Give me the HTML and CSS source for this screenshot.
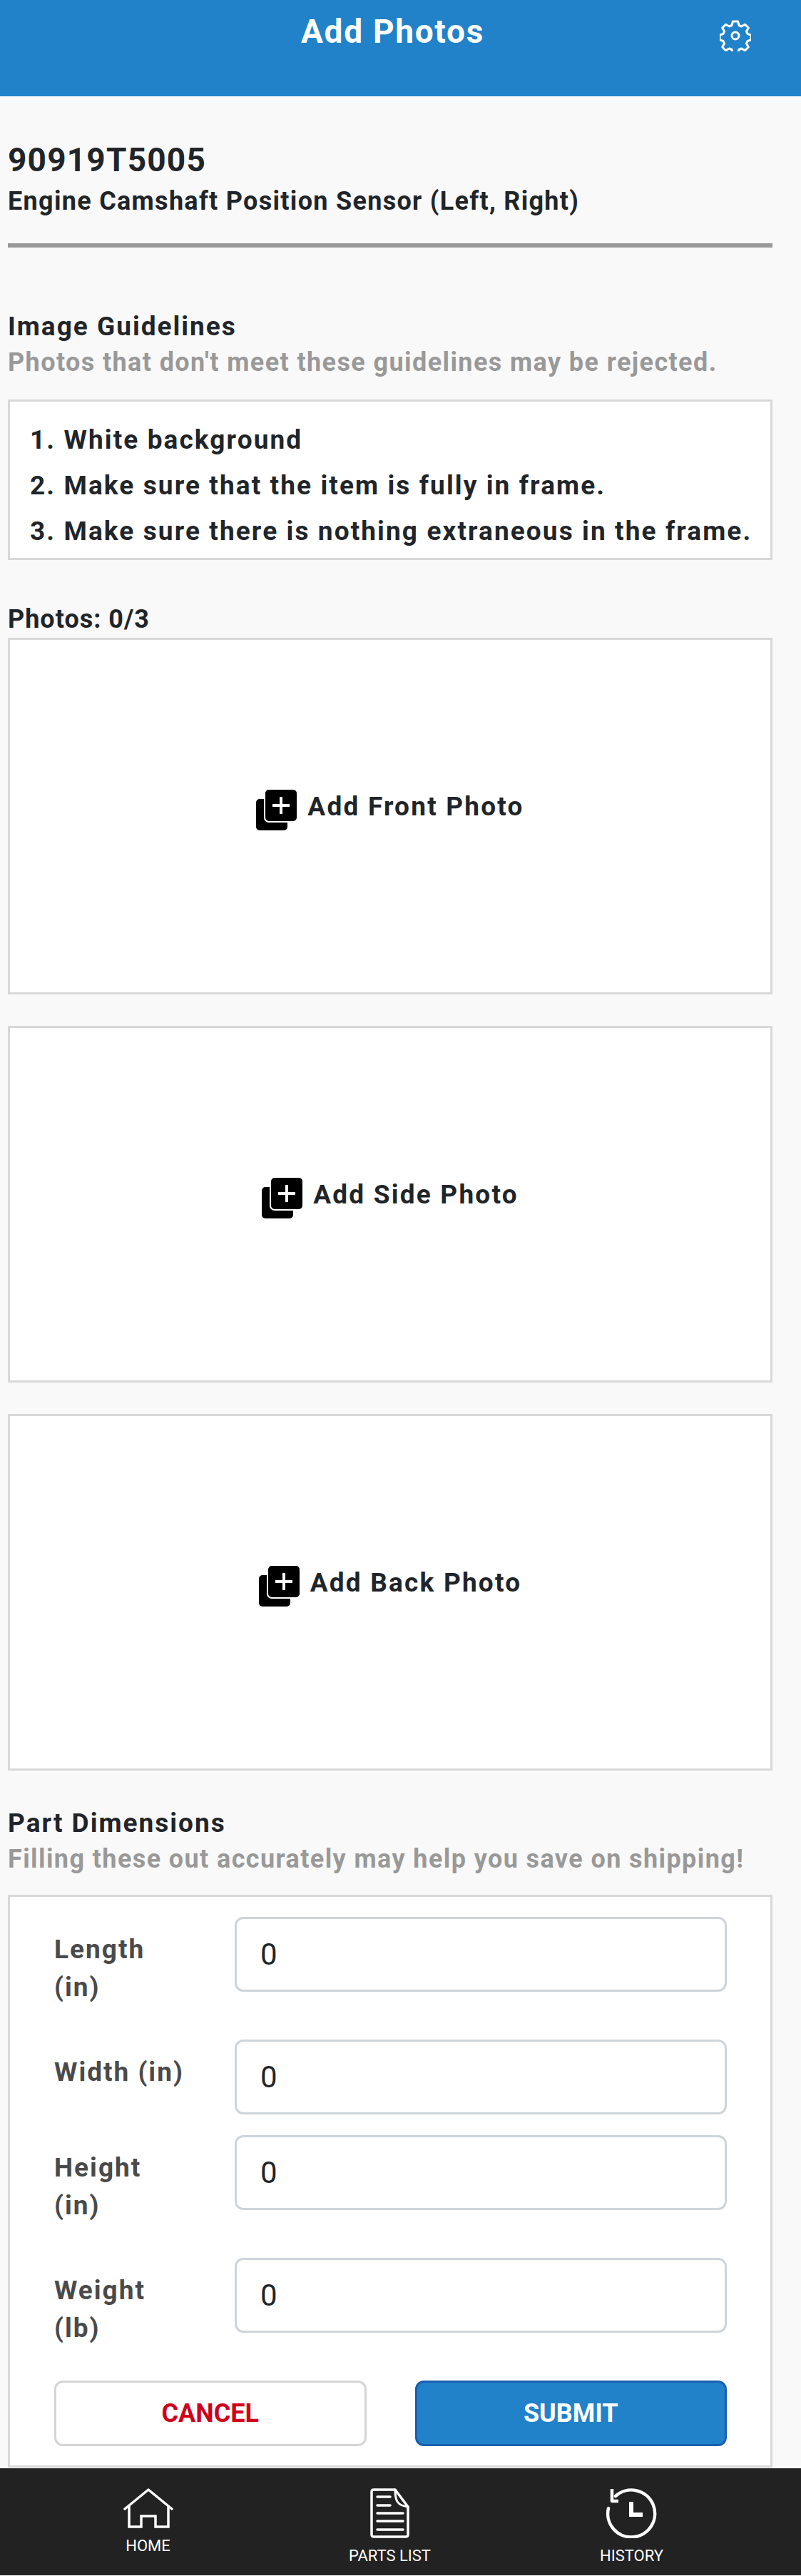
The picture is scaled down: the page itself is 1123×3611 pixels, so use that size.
FILE: index.html
```html
<!DOCTYPE html>
<html>
<head>
    <meta charset="UTF-8">
    <title>Add Photos</title>
    <link rel="stylesheet" href="styles.css">
</head>
<body>

<div class="header">
    <h1 class="header-title">Add Photos</h1>
    <a href="javascript:;" class="header-gear">
        <svg viewBox="0 0 44 44" width="44" height="44" fill="none" stroke="#fff" stroke-width="3" stroke-linejoin="round">
            <path d="M18.5 2h7l1.5 5.5 3.5 1.5 5-2.8 4.8 4.8-2.8 5 1.5 3.5 5 1.5v7l-5 1.5-1.5 3.5 2.8 5-4.8 4.8-5-2.800-3.500 1.500-1.500 5.500h-7l-1.500-5.500-3.500-1.500-5 2.800-4.800-4.800 2.800-5-1.500-3.500-5-1.500v-7l5-1.500 1.500-3.500-2.800-5 4.800-4.800 5 2.800 3.500-1.500z"/>
            <circle cx="22" cy="22" r="5"/>
        </svg>
    </a>
</div>

<div class="content">
    <div class="part">
        <div class="part-number">90919T5005</div>
        <div class="part-name">Engine Camshaft Position Sensor (Left, Right)</div>
    </div>

    <div class="section-title">Image Guidelines</div>
    <div class="section-note">Photos that don't meet these guidelines may be rejected.</div>
    <ol class="guidelines">
        <li>1. White background</li>
        <li>2. Make sure that the item is fully in frame.</li>
        <li>3. Make sure there is nothing extraneous in the frame.</li>
    </ol>

    <div class="photos-count">Photos: 0/3</div>
    <div class="photo-box">
        <svg class="add-icon" viewBox="0 0 57 57" width="57" height="57">
            <rect x="0" y="13" width="44" height="44" rx="5" fill="#000"/>
            <rect x="11" y="-2" width="48" height="48" rx="7" fill="#fff"/>
            <rect x="13" y="0" width="44" height="44" rx="5" fill="#000"/>
            <path d="M35 10v24M23 22h24" stroke="#fff" stroke-width="4"/>
        </svg>
        <span>Add Front Photo</span>
    </div>
    <div class="photo-box">
        <svg class="add-icon" viewBox="0 0 57 57" width="57" height="57">
            <rect x="0" y="13" width="44" height="44" rx="5" fill="#000"/>
            <rect x="11" y="-2" width="48" height="48" rx="7" fill="#fff"/>
            <rect x="13" y="0" width="44" height="44" rx="5" fill="#000"/>
            <path d="M35 10v24M23 22h24" stroke="#fff" stroke-width="4"/>
        </svg>
        <span>Add Side Photo</span>
    </div>
    <div class="photo-box">
        <svg class="add-icon" viewBox="0 0 57 57" width="57" height="57">
            <rect x="0" y="13" width="44" height="44" rx="5" fill="#000"/>
            <rect x="11" y="-2" width="48" height="48" rx="7" fill="#fff"/>
            <rect x="13" y="0" width="44" height="44" rx="5" fill="#000"/>
            <path d="M35 10v24M23 22h24" stroke="#fff" stroke-width="4"/>
        </svg>
        <span>Add Back Photo</span>
    </div>

    <div class="section-title dims-title">Part Dimensions</div>
    <div class="section-note">Filling these out accurately may help you save on shipping!</div>
    <div class="dims">
        <div class="dims-row">
            <label class="dims-label">Length (in)</label>
            <input class="dims-input" type="text" value="0">
        </div>
        <div class="dims-row">
            <label class="dims-label">Width (in)</label>
            <input class="dims-input" type="text" value="0">
        </div>
        <div class="dims-row">
            <label class="dims-label">Height (in)</label>
            <input class="dims-input" type="text" value="0">
        </div>
        <div class="dims-row">
            <label class="dims-label">Weight (lb)</label>
            <input class="dims-input" type="text" value="0">
        </div>
        <div class="dims-buttons">
            <a href="javascript:;" class="btn btn-cancel">CANCEL</a>
            <a href="javascript:;" class="btn btn-submit">SUBMIT</a>
        </div>
    </div>
</div>

<div class="nav">
    <a href="javascript:;" class="nav-item">
        <svg viewBox="0 0 70 56" width="70" height="56" fill="none" stroke="#fff" stroke-width="3.500" stroke-linecap="round" stroke-linejoin="round">
            <path d="M2 29 35 2l33 27"/>
            <path d="M8 24v30h17V39h20v15h18V24" stroke-linecap="butt" stroke-linejoin="miter"/>
        </svg>
        <span>HOME</span>
    </a>
    <a href="javascript:;" class="nav-item">
        <svg viewBox="0 0 55 70" width="55" height="70" fill="none" stroke="#fff" stroke-width="3.500" stroke-linejoin="round" stroke-linecap="round">
            <path d="M2 5q0-3 3-3h30l18 24v39q0 3-3 3H5q-3 0-3-3z"/>
            <path d="M35 2c0 16 3 22 18 24" stroke-width="3"/>
            <path d="M10 12h18M10 24h18M10 35h36M10 46h36M10 58h36"/>
        </svg>
        <span>PARTS LIST</span>
    </a>
    <a href="javascript:;" class="nav-item">
        <svg viewBox="0 0 71 70" width="71" height="70" fill="none" stroke="#fff" stroke-width="4.500">
            <path d="M13 11A33 33 0 1 1 3 28" stroke-linecap="round"/>
            <path d="M8 1v17h9" stroke-linejoin="round"/>
            <path d="M35 19v18h16" stroke-width="6"/>
        </svg>
        <span>HISTORY</span>
    </a>
</div>

</body>
</html>
```
FILE: styles.css
```css
* { margin: 0; padding: 0; box-sizing: border-box; text-decoration: none; }
html, body { background: #f9f9f9; }
body { font-family: Roboto, "Liberation Sans", sans-serif; color: #212529; width: 1123px; height: 3611px; overflow: hidden; }

.header { height: 135px; background: #2182ca; display: flex; justify-content: center; position: relative; padding: 19px 22px 0 0; }
.header-title { color: #fff; font-size: 46px; font-weight: 700; line-height: 50px; letter-spacing: 1.7px; }
.header-gear { position: absolute; left: 1009px; top: 28px; display: block; height: 44px; }

.content { padding: 0 40px 0 11px; }
.part { padding-top: 62px; height: 212px; border-bottom: 6px solid #999; }
.part-number { font-size: 46px; font-weight: 700; line-height: 54px; letter-spacing: 1.2px; }
.part-name { font-size: 36px; font-weight: 700; line-height: 44px; margin-top: 9px; letter-spacing: 1.3px; }

.section-title { font-size: 37px; font-weight: 700; line-height: 44px; margin-top: 89px; letter-spacing: 2px; }
.section-note { font-size: 36px; font-weight: 700; line-height: 44px; color: #999; margin-top: 6px; letter-spacing: 1.4px; }

.guidelines { list-style: none; background: #fff; border: 3px solid #d8d8d8; height: 225px; margin-top: 30px; padding: 22px 0 0 28px; }
.guidelines li { font-size: 37px; font-weight: 700; line-height: 64px; letter-spacing: 2.1px; white-space: nowrap; }

.photos-count { font-size: 36px; font-weight: 700; line-height: 44px; margin-top: 61px; margin-bottom: 4px; letter-spacing: 1px; }
.photo-box { height: 500px; background: #fff; border: 3px solid #d8d8d8; display: flex; align-items: center; justify-content: center; gap: 15px; margin-bottom: 44px; padding-bottom: 17px; font-size: 37px; font-weight: 700; letter-spacing: 2.2px; }
.photo-box:last-of-type { margin-bottom: 0; height: 501px; }
.photo-box span { margin-bottom: 10px; }
.add-icon { overflow: hidden; flex: none; }

.dims-title { margin-top: 52px; }
.dims { background: #fff; border: 3px solid #d8d8d8; height: 803px; margin-top: 28px; padding: 28px 61px 0 62px; }
.dims-row { display: flex; margin-bottom: 29px; }
.dims-label { width: 253px; flex: none; padding: 19px 60px 18px 0; font-size: 37px; font-weight: 700; line-height: 53px; color: #4a4a4a; letter-spacing: 2px; }
.dims-input { width: 690px; height: 105px; border: 3px solid #ced4da; border-radius: 12px; background: #fff; padding: 0 33px; font-family: Roboto, sans-serif; font-size: 42px; color: #212529; }
.dims-buttons { display: flex; gap: 68px; }
.btn { flex: 1; height: 92px; border-radius: 12px; border: 3px solid #d5d5d5; background: #fff; font-size: 36px; font-weight: 700; line-height: 86px; text-align: center; }
.btn-cancel { color: #d0021b; }
.btn-submit { color: #fff; background: #2182ca; border-color: #1a5fb0; }

.nav { position: absolute; left: 0; top: 3460px; width: 1123px; height: 150px; background: #222; display: grid; grid-template-columns: repeat(3, 339px); padding: 28px 0 0 38px; }
.nav-item { display: flex; flex-direction: column; align-items: center; color: #fff; font-size: 22px; line-height: 26px; }
.nav-item span { margin-top: 12px; }
```
